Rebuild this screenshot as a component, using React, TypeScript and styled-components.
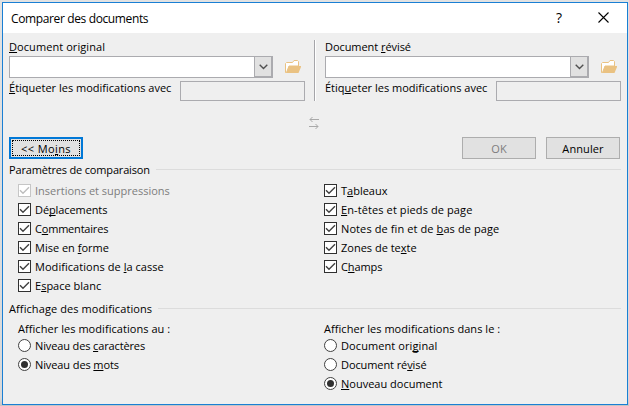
import React from 'react';
import styled, { createGlobalStyle } from 'styled-components';

const GlobalStyle = createGlobalStyle`
  * { box-sizing: border-box; }
  body {
    margin: 0;
    background: #dcdcdc;
    font: 11px/15px 'Open Sans', 'Noto Sans', sans-serif;
    color: #000;
  }
`;

const Desktop = styled.div`
  width: 629px;
  height: 406px;
  padding: 2px 1px 1px 2px;
  background: linear-gradient(#e2e2e2, #d9d9d9 98%, #c4c4c4);
`;

const Dialog = styled.div`
  height: 403px;
  border: 1px solid #1a7fd4;
  background: #efefef;
`;

const TitleBar = styled.header`
  display: flex;
  align-items: center;
  height: 30px;
  padding: 0 2px 0 8px;
  background: #fff;
`;

const Title = styled.h1`
  flex: 1;
  margin: 0;
  font-size: 12px;
  font-weight: 400;
  line-height: 17px;
  letter-spacing: -0.37px;
`;

const TitleButton = styled.button<{ $width: number }>`
  display: flex;
  justify-content: center;
  align-items: center;
  width: ${(p) => p.$width}px;
  height: 28px;
  padding: 0 0 1px;
  border: 0;
  background: none;
  font: 14px/18px 'Open Sans', sans-serif;
  color: #000;
`;

const Body = styled.main`
  padding: 6px 6px 0 6px;
`;

const Documents = styled.section`
  display: flex;
  gap: 9px;
  height: 62px;
`;

const DocumentPanel = styled.div`
  width: 296px;
`;

const Divider = styled.div`
  width: 2px;
  margin-top: 1px;
  border-left: 1px solid #a5a5a9;
  background: #fff;
`;

const Text = styled.span<{ $track?: number; $muted?: boolean }>`
  display: block;
  height: 15px;
  white-space: pre;
  letter-spacing: ${(p) => p.$track ?? 0}px;
  color: ${(p) => (p.$muted ? '#7d7d7d' : '#000')};
`;

const AccessKey = styled.span`
  text-decoration: underline;
  text-decoration-thickness: 1px;
  text-underline-offset: 1px;
  text-decoration-skip-ink: none;
`;

const PickerRow = styled.div`
  display: flex;
  align-items: center;
  gap: 12px;
  margin-top: 2px;
`;

const Combo = styled.div`
  display: flex;
  justify-content: flex-end;
  width: 264px;
  height: 22px;
  border: 1px solid #ababaf;
  background: #fff;
`;

const ComboArrow = styled.div`
  display: flex;
  align-items: center;
  justify-content: center;
  width: 18px;
  height: 20px;
  border: 1px solid #ababaf;
  border-top-width: 0;
  background: #e1e1e1;
`;

const TagRow = styled.div`
  display: flex;
  justify-content: space-between;
  margin-top: 2px;
`;

const TagInput = styled.div`
  width: 125px;
  height: 20px;
  margin-top: 1px;
  padding: 1px;
  border: 1px solid #ababaf;
  background: #efefef content-box, #fff;
`;

const SwapRow = styled.div`
  display: flex;
  justify-content: center;
  height: 36px;
  padding: 16px 2px 0 0;
`;

const Actions = styled.div`
  display: flex;
  gap: 10px;
  padding-right: 1px;
`;

const Button = styled.button<{ $primary?: boolean }>`
  display: flex;
  align-items: center;
  justify-content: center;
  width: 74px;
  height: 22px;
  padding: 0;
  border: ${(p) => (p.$primary ? '2px solid #0078d7' : '1px solid #adadad')};
  background: #e1e1e1;
  font: inherit;
`;

const FocusRing = styled.span`
  display: flex;
  align-items: center;
  justify-content: center;
  width: 68px;
  height: 16px;
  border: 1px dotted #000;
`;

const Spacer = styled.div`
  flex: 1;
`;

const SectionHeader = styled.div<{ $top: number }>`
  display: flex;
  gap: 6px;
  margin-top: ${(p) => p.$top}px;

  &::after {
    content: '';
    flex: 1;
    height: 1px;
    margin-top: 7px;
    background: #dcdcdc;
  }
`;

const Options = styled.div<{ $top: number }>`
  display: grid;
  grid-template-columns: 306px 1fr;
  align-items: start;
  margin-top: ${(p) => p.$top}px;
  padding-left: 9px;
`;

const Option = styled.label`
  display: flex;
  align-items: center;
  gap: 4px;
  height: 19px;
`;

const Svg = styled.svg`
  display: block;
  flex: none;
`;

type Caption = { text: string; track?: number };

/* An ampersand marks the letter that follows it as the access key. */
function Label({ text, track, muted }: Caption & { muted?: boolean }) {
  const at = text.indexOf('&');
  return (
    <Text $track={track} $muted={muted}>
      {at < 0 ? text : (
        <>
          {text.slice(0, at)}
          <AccessKey>{text[at + 1]}</AccessKey>
          {text.slice(at + 2)}
        </>
      )}
    </Text>
  );
}

function Check({ muted, ...caption }: Caption & { muted?: boolean }) {
  return (
    <Option>
      <Svg width="13" height="13" viewBox="0 0 13 13">
        <rect x=".5" y=".5" width="12" height="12" fill="#fff" stroke={muted ? '#c6c6c6' : '#303030'} />
        <path d="M2 6.2 5 9.2 11 3.2" fill="none" stroke={muted ? '#bdbdbd' : '#404040'} strokeWidth="1.4" />
      </Svg>
      <Label {...caption} muted={muted} />
    </Option>
  );
}

function Radio({ on, ...caption }: Caption & { on?: boolean }) {
  return (
    <Option>
      <Svg width="13" height="13" viewBox="0 0 13 13">
        <circle cx="6.5" cy="6.5" r="6" fill="#fff" stroke="#404040" />
        {on && <circle cx="6.5" cy="6.5" r="3.5" fill="#303030" />}
      </Svg>
      <Label {...caption} />
    </Option>
  );
}

function Picker({ title, tag }: { title: Caption; tag: Caption }) {
  return (
    <DocumentPanel>
      <Label {...title} />
      <PickerRow>
        <Combo>
          <ComboArrow>
            <Svg width="9" height="6" viewBox="0 0 9 6">
              <path d="M.7.8 4.5 4.5 8.3.8" fill="none" stroke="#505050" strokeWidth="1.4" />
            </Svg>
          </ComboArrow>
        </Combo>
        <Svg width="16" height="14" viewBox="0 0 16 14">
          <path d="M.5 12.5V3.5L1.5 2.5H7.5L9 .5H12.5L13.5 1.5V6H4L1.5 12.5Z" fill="#fff" stroke="#eac282" />
          <path d="M4 6H16V7L13.5 13H.5V12.5H1.5Z" fill="#eac282" />
        </Svg>
      </PickerRow>
      <TagRow>
        <Label {...tag} />
        <TagInput />
      </TagRow>
    </DocumentPanel>
  );
}

export default function App() {
  return (
    <Desktop>
      <GlobalStyle />
      <Dialog>
        <TitleBar>
          <Title>Comparer des documents</Title>
          <TitleButton $width={46}>?</TitleButton>
          <TitleButton $width={43}>
            <Svg width="11" height="11" viewBox="0 0 11 11">
              <path d="M.5.5 10.5 10.5M10.5.5.5 10.5" stroke="#000" strokeWidth="1.1" />
            </Svg>
          </TitleButton>
        </TitleBar>
        <Body>
          <Documents>
            <Picker
              title={{ text: '&Document original', track: 0.07 }}
              tag={{ text: '&Étiqueter les modifications avec' }}
            />
            <Divider />
            <Picker
              title={{ text: 'Document &révisé', track: -0.06 }}
              tag={{ text: 'Étiq&ueter les modifications avec' }}
            />
          </Documents>
          <SwapRow>
            <Svg width="10" height="13" viewBox="0 0 10 13">
              <path d="M10 2.5H1M3.5 0 1 2.5 3.5 5M0 9.5H9M6.5 7 9 9.5 6.5 12" fill="none" stroke="#a9a9a9" />
            </Svg>
          </SwapRow>
          <Actions>
            <Button $primary>
              <FocusRing>
                <Label text="<< Mo&ins" track={0.4} />
              </FocusRing>
            </Button>
            <Spacer />
            <Button disabled>
              <Label text="OK" muted />
            </Button>
            <Button>
              <Label text="Annuler" track={0.1} />
            </Button>
          </Actions>

          <SectionHeader $top={3}>
            <Label text="Paramètres de comparaison" track={-0.17} />
          </SectionHeader>
          <Options $top={4}>
            <div>
              <Check text="Insertions et suppressions" muted />
              <Check text="Dé&placements" track={-0.1} />
              <Check text="C&ommentaires" track={-0.2} />
              <Check text="Mise en &forme" />
              <Check text="Modifications de &la casse" track={0.05} />
              <Check text="E&space blanc" />
            </div>
            <div>
              <Check text="T&ableaux" />
              <Check text="&En-têtes et pieds de page" track={0.1} />
              <Check text="Notes de fin et de &bas de page" track={0.1} />
              <Check text="Zones de te&xte" />
              <Check text="C&hamps" track={-0.1} />
            </div>
          </Options>

          <SectionHeader $top={6}>
            <Label text="Affichage des modifications" track={0.09} />
          </SectionHeader>
          <Options $top={5}>
            <div>
              <Label text="Afficher les modifications au :" track={0.05} />
              <Radio text="Niveau des &caractères" track={-0.13} />
              <Radio text="Niveau des &mots" track={-0.1} on />
            </div>
            <div>
              <Label text="Afficher les modifications dans le :" track={0.05} />
              <Radio text="Document ori&ginal" track={0.09} />
              <Radio text="Document ré&visé" track={-0.09} />
              <Radio text="&Nouveau document" on />
            </div>
          </Options>
        </Body>
      </Dialog>
    </Desktop>
  );
}
